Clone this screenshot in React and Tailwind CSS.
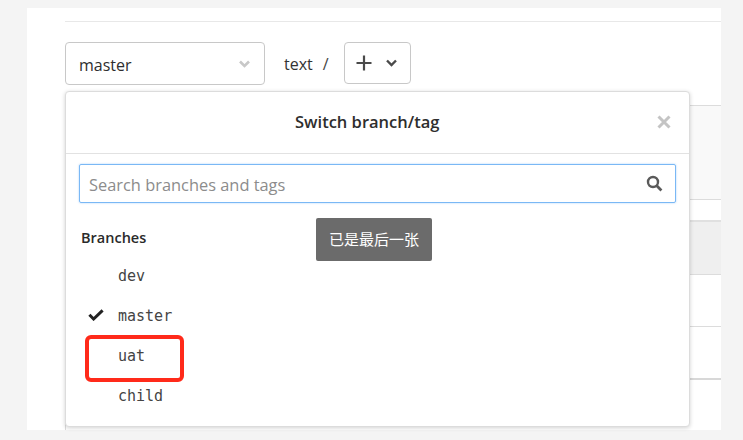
import React from 'react';

const sans = 'font-["Open_Sans","Noto_Sans_CJK_SC",sans-serif]';

const BranchRow = ({ name, active }) => (
  <div className="flex h-10 items-center pl-[22px]">
    <span className="flex w-[30px] items-center">
      {active && (
        <svg width="16" height="12" viewBox="0 0 16 12" className="-mt-[2px] text-[#222]">
          <path d="M1.4 5.8 L5.6 10 L14.6 1.4" fill="none" stroke="currentColor" strokeWidth="3" />
        </svg>
      )}
    </span>
    <span className='font-["DejaVu_Sans_Mono",monospace] text-[15px] text-[#444]'>{name}</span>
  </div>
);

const App = () => {
  return (
    <div className={`h-[440px] w-[743px] overflow-hidden bg-[#f4f4f4] pt-2 pl-[27px] ${sans}`}>
      <div className="relative h-[422px] w-[694px] bg-white pl-[38px]">
        <div className="pt-[13px]">
          <div className="h-px bg-[#e8e8e8]"></div>
        </div>

        <div className="mt-5 flex items-start">
          <div className="flex h-[43px] w-[200px] items-center justify-between rounded-[4px] border border-[#c8c8c8] pr-[14px] pl-[13px] text-[16px] text-[#2e2e2e]">
            <span className="mt-[2px]">master</span>
            <svg width="11" height="8" viewBox="0 0 11 8" className="text-[#c8c8c8]">
              <path d="M1 1.5 L5.5 6 L10 1.5" fill="none" stroke="currentColor" strokeWidth="2.6" />
            </svg>
          </div>
          <span className="mt-[10px] ml-[19px] text-[16px] text-[#333]">text</span>
          <span className="mt-[10px] ml-[10px] text-[16px] text-[#444]">/</span>
          <div className="ml-[15px] flex h-[42px] w-[67px] items-center gap-[14px] rounded-[4px] border border-[#c8c8c8] pl-[11px]">
            <svg width="16" height="16" viewBox="0 0 16 16" className="text-[#4a4a4a]">
              <path d="M8 0.5 V15.5 M0.5 8 H15.5" fill="none" stroke="currentColor" strokeWidth="2.2" />
            </svg>
            <svg width="11" height="8" viewBox="0 0 11 8" className="text-[#4a4a4a]">
              <path d="M1 1.5 L5.5 6 L10 1.5" fill="none" stroke="currentColor" strokeWidth="2.4" />
            </svg>
          </div>
        </div>

        {/* table behind the dropdown */}
        <div className="mt-[20px] flex flex-col border-l border-[#dcdcdc]">
          <div className="h-[94px] border-t border-[#dcdcdc] bg-[#f9f9f9]"></div>
          <div className="h-[21px] border-t border-[#dcdcdc] bg-white"></div>
          <div className="h-[54px] border-t-2 border-[#e0e0e0] bg-[#efefef]"></div>
          <div className="h-[52px] border-t border-[#dcdcdc]"></div>
          <div className="h-[52px] border-t border-[#dcdcdc]"></div>
          <div className="h-[52px] border-t-2 border-[#d8d8d8]"></div>
        </div>

        {/* branch dropdown */}
        <div className="absolute top-[83px] left-[38px] z-10 h-[336px] w-[625px] rounded-[4px] border border-[#dcdcdc] bg-white shadow-[0_1px_4px_rgba(0,0,0,0.18)]">
          <div className="relative flex h-[62px] items-center border-b border-[#e2e2e2] pl-[229px]">
            <span className="text-[16.5px] font-semibold text-[#2e2e2e]">Switch branch/tag</span>
            <svg width="14" height="14" viewBox="0 0 14 14" className="absolute top-[23px] right-[18px] text-[#c4c4c4]">
              <path d="M1.5 1.5 L12.5 12.5 M12.5 1.5 L1.5 12.5" fill="none" stroke="currentColor" strokeWidth="3" />
            </svg>
          </div>
          <div className="px-[13px] pt-[10px]">
            <div className="flex h-[39px] items-center justify-between rounded-[2px] border border-[#7ab8f5] pr-[12px] pl-[9px] shadow-[0_0_2px_rgba(100,170,245,0.6)]">
              <span className="mt-[3px] text-[16.4px] text-[#8c8c8c]">Search branches and tags</span>
              <svg width="17" height="17" viewBox="0 0 17 17" className="text-[#5a5a5a]">
                <circle cx="7" cy="7" r="5" fill="none" stroke="currentColor" strokeWidth="2.4" />
                <path d="M10.8 10.8 L15.4 15.4" fill="none" stroke="currentColor" strokeWidth="2.8" />
              </svg>
            </div>
          </div>
          <div className="mt-[25px] pl-[15px] text-[14.5px] font-semibold leading-[20px] text-[#2a2a2a]">Branches</div>
          <div className="mt-[8px]">
            <BranchRow name="dev" />
            <BranchRow name="master" active />
            <BranchRow name="uat" />
            <BranchRow name="child" />
          </div>
          <div className="absolute top-[243px] left-[19px] h-[47px] w-[99px] rounded-[6px] border-4 border-[#ff2a1a]"></div>
        </div>

        {/* toast */}
        <div className="absolute top-[210px] left-[289px] z-20 flex h-[43px] w-[116px] items-center justify-center rounded-[2px] bg-[#6b6b6b] text-[15px] text-white">
          已是最后一张
        </div>
      </div>
    </div>
  );
};

export default App;
